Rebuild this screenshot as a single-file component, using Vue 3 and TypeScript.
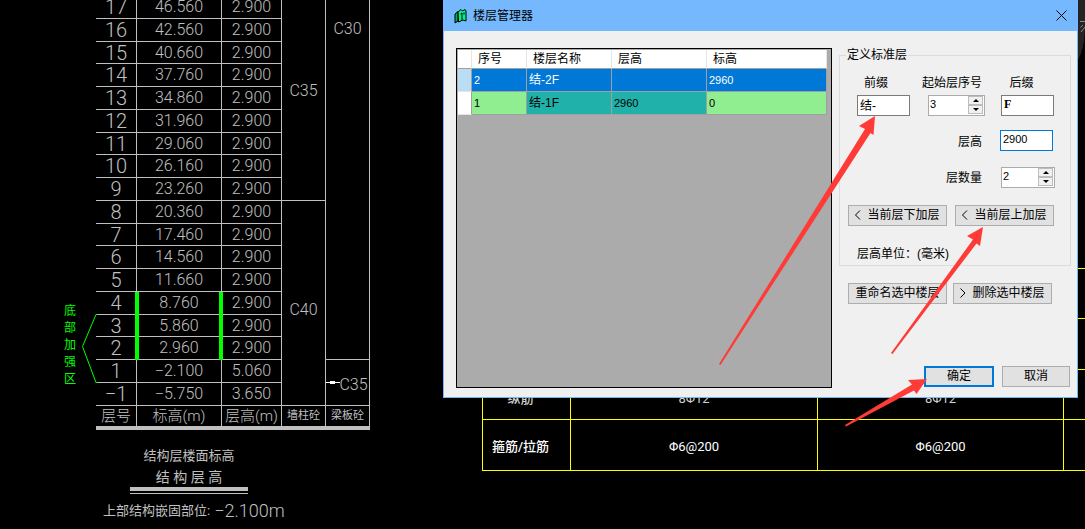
<script setup lang="ts">
import { ref } from 'vue'

interface Storey {
  no: string
  level: string
  height: string
  wall?: { grade: string; span: number; cls: string }
  slab?: { grade: string; span: number; cls: string }
  marked?: boolean
}

const storeys: Storey[] = [
  {
    no: '17', level: '46.560', height: '2.900',
    wall: { grade: 'C35', span: 9, cls: 'wall-upper' },
    slab: { grade: 'C30', span: 16, cls: 'slab-upper' },
  },
  { no: '16', level: '42.560', height: '2.900' },
  { no: '15', level: '40.660', height: '2.900' },
  { no: '14', level: '37.760', height: '2.900' },
  { no: '13', level: '34.860', height: '2.900' },
  { no: '12', level: '31.960', height: '2.900' },
  { no: '11', level: '29.060', height: '2.900' },
  { no: '10', level: '26.160', height: '2.900' },
  { no: '9', level: '23.260', height: '2.900' },
  { no: '8', level: '20.360', height: '2.900', wall: { grade: 'C40', span: 9, cls: 'wall-lower' } },
  { no: '7', level: '17.460', height: '2.900' },
  { no: '6', level: '14.560', height: '2.900' },
  { no: '5', level: '11.660', height: '2.900' },
  { no: '4', level: '8.760', height: '2.900', marked: true },
  { no: '3', level: '5.860', height: '2.900', marked: true },
  { no: '2', level: '2.960', height: '2.900', marked: true },
  { no: '1', level: '−2.100', height: '5.060', slab: { grade: 'C35', span: 2, cls: 'slab-lower' } },
  { no: '−1', level: '−5.750', height: '3.650' },
]

const floors = ref([
  { no: '2', name: '结-2F', height: '', level: '2960' },
  { no: '1', name: '结-1F', height: '2960', level: '0' },
])
const selected = ref('2')

const prefix = ref('结-')
const suffix = ref('F')
const startNo = ref(3)
const floorHeight = ref('2900')
const count = ref(2)
</script>

<template>
  <main class="canvas">
    <section class="storeys">
      <table class="storey-table">
        <tbody>
          <tr v-for="s in storeys" :key="s.no">
            <td class="no">{{ s.no }}</td>
            <td class="level" :class="{ marked: s.marked }">{{ s.level }}</td>
            <td class="height">{{ s.height }}</td>
            <td v-if="s.wall" class="grade" :class="s.wall.cls" :rowspan="s.wall.span">{{ s.wall.grade }}</td>
            <td v-if="s.slab" class="grade" :class="s.slab.cls" :rowspan="s.slab.span">{{ s.slab.grade }}</td>
          </tr>
        </tbody>
        <tfoot>
          <tr>
            <th>层号</th>
            <th>标高(m)</th>
            <th>层高(m)</th>
            <th class="small">墙柱砼</th>
            <th class="small">梁板砼</th>
          </tr>
        </tfoot>
      </table>
      <div class="caption">
        <p>结构层楼面标高</p>
        <p class="wide">结 构 层 高</p>
      </div>
      <p class="note">上部结构嵌固部位:<span>−2.100m</span></p>
    </section>

    <div class="zone">
      <span>底</span><span>部</span><span>加</span><span>强</span><span>区</span>
    </div>
    <svg class="bracket" width="16" height="70" viewBox="0 0 16 70" aria-hidden="true">
      <path d="M15.500.5H14L.5 32.500 14 68.500H15.500" fill="none" stroke="#00ff00" />
    </svg>
    <svg class="leader" width="14" height="5" viewBox="0 0 14 5" aria-hidden="true">
      <path d="M0 2h14v1H0zM4 1h5v3H4z" fill="#fff" />
    </svg>

    <table class="rebar">
      <tbody>
        <tr><td></td><td></td><td></td><td></td></tr>
        <tr><td></td><td></td><td></td><td></td></tr>
        <tr class="dim"><th>纵筋</th><td>8Φ12</td><td>8Φ12</td><td></td></tr>
        <tr><th>箍筋/拉筋</th><td>Φ6@200</td><td>Φ6@200</td><td></td></tr>
      </tbody>
    </table>

    <svg class="compass" width="7" height="62" viewBox="0 0 7 62" aria-hidden="true">
      <path d="M0 0h7v29Q6 50 0 60z" fill="#242424" />
      <path d="M2 21.500h5M5 25 2.500 27.500M7 27 3 32" stroke="#8d8d8d" fill="none" />
    </svg>

    <section class="dialog" role="dialog" aria-labelledby="dialog-title">
      <header class="titlebar">
        <svg width="13" height="16" viewBox="0 0 13 16" aria-hidden="true">
          <path d="M1 6 4 3.500V13L1 15z" fill="#08a860" stroke="#000" />
          <path d="M4 4 7 1.500 8.500 3 11 1.500 12 3V13L9 12 4.500 14z" fill="#00f58a" stroke="#000" />
          <path d="M6.500 6 8 5v7M10 4.500v2" fill="none" stroke="#000" />
        </svg>
        <h1 id="dialog-title">楼层管理器</h1>
        <button class="close" type="button" aria-label="关闭">
          <svg width="11" height="11" viewBox="0 0 11 11"><path d="M.5.5l10 10M10.500.5l-10 10" stroke="#000" /></svg>
        </button>
      </header>

      <div class="content">
        <div class="grid-box">
          <table class="floors">
            <colgroup><col class="c-mark"><col class="c-no"><col class="c-name"><col class="c-height"><col></colgroup>
            <thead>
              <tr><td></td><th>序号</th><th>楼层名称</th><th>层高</th><th>标高</th></tr>
            </thead>
            <tbody>
              <tr v-for="f in floors" :key="f.no" :class="{ selected: f.no === selected }" @click="selected = f.no">
                <td class="mark"></td>
                <td>{{ f.no }}</td>
                <td class="teal name">{{ f.name }}</td>
                <td class="teal">{{ f.height }}</td>
                <td>{{ f.level }}</td>
              </tr>
            </tbody>
          </table>
        </div>

        <div class="side">
          <fieldset>
            <legend>定义标准层</legend>
            <div class="fields">
              <label class="col-a" for="prefix">前缀</label>
              <label class="col-b" for="start">起始层序号</label>
              <label class="col-c" for="suffix">后缀</label>
              <input id="prefix" v-model="prefix" class="cjk" type="text">
              <div class="spinner middle">
                <input id="start" v-model="startNo" type="text" inputmode="numeric">
                <div class="steps">
                  <button type="button" aria-label="增加序号" @click="startNo++"><i class="up"></i></button>
                  <button type="button" aria-label="减少序号" @click="startNo--"><i class="down"></i></button>
                </div>
              </div>
              <input id="suffix" v-model="suffix" class="serif" type="text">
            </div>
            <div class="line">
              <label for="height">层高</label>
              <input id="height" v-model="floorHeight" class="focus" type="text">
            </div>
            <div class="line second">
              <label for="count">层数量</label>
              <div class="spinner">
                <input id="count" v-model="count" type="text" inputmode="numeric">
                <div class="steps">
                  <button type="button" aria-label="增加数量" @click="count++"><i class="up"></i></button>
                  <button type="button" aria-label="减少数量" @click="count--"><i class="down"></i></button>
                </div>
              </div>
            </div>
            <div class="pair">
              <button class="btn" type="button"><svg width="6" height="10" viewBox="0 0 6 10" aria-hidden="true"><path d="M5 .5.5 5 5 9.500" /></svg>当前层下加层</button>
              <button class="btn" type="button"><svg width="6" height="10" viewBox="0 0 6 10" aria-hidden="true"><path d="M5 .5.5 5 5 9.500" /></svg>当前层上加层</button>
            </div>
            <p class="unit">层高单位：(毫米)</p>
          </fieldset>
          <div class="pair lower">
            <button class="btn" type="button">重命名选中楼层</button>
            <button class="btn" type="button"><svg width="6" height="10" viewBox="0 0 6 10" aria-hidden="true"><path d="M.5.5 5 5 .5 9.500" /></svg>删除选中楼层</button>
          </div>
          <div class="actions">
            <button class="btn primary" type="button">确定</button>
            <button class="btn" type="button">取消</button>
          </div>
        </div>
      </div>
    </section>

    <svg class="arrows" width="270" height="315" viewBox="715 113 270 315" aria-hidden="true">
      <path d="M875 116 859 126 865 129 719 364 720.500 365 870.500 133 873.500 135z" />
      <path d="M983 227 967 236 973 239.500 891 353 892.500 354 976.500 243.500 980 246z" />
      <path d="M927 379 908 380 912 384.500 845 425 846 426.500 914 390.500 916.500 394z" />
    </svg>
  </main>
</template>

<style>
body {
  background: #000;
}
</style>

<style scoped>
* {
  box-sizing: border-box;
}

p,
h1 {
  margin: 0;
  font-weight: 400;
}

.canvas {
  position: relative;
  min-height: 100vh;
  overflow: hidden;
  background: #000;
  color: #c0c0c0;
  font-family: Roboto, "Liberation Sans", "Noto Sans CJK SC", sans-serif;
  font-weight: 300;
}

/* drawing: storey table */
.storeys {
  position: absolute;
  left: 96px;
  top: -4px;
  width: 274px;
}

.storey-table {
  width: 100%;
  table-layout: fixed;
  border-spacing: 0;
  border-bottom: 4px solid #c0c0c0;
  text-align: center;
  font-size: 16px;
  line-height: 20px;
}

.storey-table td,
.storey-table th {
  padding: 0;
  border-right: 1px solid #c0c0c0;
  font-weight: 300;
  white-space: nowrap;
}

.storey-table td {
  border-bottom: 1px solid #c0c0c0;
}

.storey-table tbody tr {
  height: 23px;
}

.storey-table tbody tr:nth-child(4n + 3) {
  height: 22px;
}

.storey-table .no {
  width: 41px;
  font-size: 20px;
}

.storey-table .level {
  position: relative;
  width: 85px;
}

.storey-table .height {
  width: 60px;
}

.storey-table .marked::before,
.storey-table .marked::after {
  content: "";
  position: absolute;
  top: 0;
  bottom: -1px;
  width: 4px;
  background: #00ff00;
}

.storey-table .marked::before {
  left: -2px;
}

.storey-table .marked::after {
  right: -2px;
}

.grade {
  width: 44px;
  vertical-align: top;
}

.wall-upper {
  padding-top: 85px !important;
}

.slab-upper {
  padding-top: 23px !important;
}

.wall-lower {
  padding-top: 99px !important;
}

.slab-lower {
  padding: 15px 0 0 12px !important;
}

.storey-table tfoot th {
  height: 20px;
  font-size: 15px;
}

.storey-table tfoot .small {
  font-size: 11px;
  font-weight: 400;
}

.caption {
  width: 118px;
  margin: 15px 0 0 34px;
  padding-bottom: 2px;
  border-bottom: 1px solid #c0c0c0;
  text-align: center;
  font-size: 13px;
  line-height: 22px;
}

.caption .wide {
  border-bottom: 4px solid #c0c0c0;
  font-size: 14px;
  line-height: 20px;
}

.note {
  display: flex;
  gap: 4px;
  margin: 6px 0 0 7px;
  font-size: 13px;
  line-height: 22px;
  white-space: nowrap;
}

.note,
.caption p {
  font-weight: 400;
}

.note span {
  font-size: 18px;
  font-weight: 300;
}

.zone {
  position: absolute;
  left: 64px;
  top: 303px;
  display: flex;
  flex-direction: column;
  color: #00ff00;
  font-size: 12px;
  font-weight: 400;
  line-height: 17px;
}

.bracket {
  position: absolute;
  left: 82px;
  top: 314px;
}

.leader {
  position: absolute;
  left: 326px;
  top: 380px;
}

/* drawing: reinforcement table */
.rebar {
  position: absolute;
  left: 482px;
  right: 0;
  top: 268px;
  width: calc(100% - 482px);
  table-layout: fixed;
  border-spacing: 0;
  border-top: 1px solid #ffff00;
  border-left: 1px solid #ffff00;
  color: #fff;
  font-size: 13px;
  line-height: 18px;
  text-align: center;
}

.rebar th,
.rebar td {
  height: 51px;
  padding: 4px 0 0;
  border: 0 solid #ffff00;
  border-width: 0 1px 1px 0;
  font-weight: 400;
}

.rebar tr:first-child td,
.rebar .dim > * {
  height: 50px;
}

.rebar tr > :nth-child(1) {
  width: 88px;
}

.rebar tr > :nth-child(2) {
  width: 247px;
}

.rebar tr > :nth-child(3) {
  width: 246px;
}

.rebar tr > :last-child {
  border-right: 0;
}

.rebar th {
  padding-right: 12px;
  font-weight: 500;
}

.rebar .dim {
  color: #d0d0d0;
}

.rebar .dim > * {
  padding-top: 8px;
}

.compass {
  position: absolute;
  right: 0;
  top: 0;
}

/* dialog */
.dialog {
  position: absolute;
  left: 443px;
  right: 7px;
  top: 0;
  border: 1px solid #75b8fd;
  border-top: 0;
  background: #f0f0f0;
  color: #000;
  font-family: "Liberation Sans", "Noto Sans CJK SC", sans-serif;
  font-size: 12px;
  font-weight: 400;
  line-height: 16px;
}

.titlebar {
  display: flex;
  align-items: center;
  gap: 6px;
  height: 31px;
  padding: 0 10px;
  background: #75b8fd;
}

.titlebar h1 {
  flex: 1;
  font-size: 12px;
}

.close {
  display: flex;
  padding: 0;
  border: 0;
  background: none;
}

.content {
  display: flex;
  gap: 7px;
  padding: 17px 6px 9px 12px;
}

.grid-box {
  flex: 1;
  min-height: 340px;
  padding: 1px 4px 0 1px;
  border: 1px solid #000;
  background: #ababab;
}

.floors {
  width: 100%;
  table-layout: fixed;
  border-spacing: 0;
  font-size: 11px;
}

.c-mark {
  width: 14px;
}

.c-no {
  width: 55px;
}

.c-name {
  width: 85px;
}

.c-height {
  width: 95px;
}

.floors th,
.floors td {
  padding: 0 2px;
  border: 0 solid #a0a0a0;
  border-width: 0 1px 1px 0;
}

.floors thead > tr > * {
  height: 19px;
  padding: 0 6px;
  background: #fff;
  border-right-color: #e5e5e5;
  font-size: 12px;
  font-weight: 400;
  text-align: left;
}

.floors tbody td {
  height: 23px;
  background: #90ee90;
}

.floors tbody .teal {
  background: #20b2aa;
}

.floors tbody .name {
  font-size: 12px;
}

.floors tbody .mark {
  background: #fff;
  border-bottom-color: #e5e5e5;
}

.floors .selected td,
.floors .selected .teal {
  background: #0078d7;
  color: #fff;
}

.floors tbody .selected .mark {
  background: #badcf4;
}

.side {
  display: flex;
  flex-direction: column;
  width: 232px;
}

fieldset {
  min-width: 0;
  margin: 0;
  padding: 0 0 3px 8px;
  border: 1px solid #dcdcdc;
}

legend {
  height: 15px;
  margin-left: -2px;
  padding: 0 1px;
  line-height: 14px;
}

.fields {
  display: grid;
  grid-template-columns: 54px 56px 53px;
  column-gap: 17px;
  row-gap: 4px;
  margin: 12px 0 0 9px;
}

.fields label {
  justify-self: center;
  margin: 0 -8px;
  white-space: nowrap;
}

.fields .col-a {
  padding-right: 16px;
}

.fields .col-b {
  padding-right: 8px;
}

.fields .col-c {
  padding-right: 12px;
}

input {
  width: 53px;
  height: 21px;
  padding: 0 2px 3px;
  border: 1px solid #7a7a7a;
  border-radius: 0;
  outline: 0;
  background: #fff;
  color: #000;
  font-family: inherit;
  font-size: 11px;
}

input.cjk {
  font-size: 12px;
}

input.serif {
  font-family: "Liberation Serif", serif;
  font-size: 12px;
  font-weight: 700;
}

input.focus {
  border-color: #0078d7;
}

.spinner {
  display: flex;
  width: 54px;
  height: 21px;
  padding: 0 1px 1px 0;
  border: 1px solid #acacac;
  background: #fff;
}

.spinner.middle {
  width: 57px;
}

.spinner input {
  flex: 1;
  width: 0;
  height: 19px;
  padding: 0 1px 3px;
  border: 0;
}

.steps {
  display: flex;
  flex-direction: column;
  width: 15px;
}

.steps button {
  display: flex;
  flex: 1;
  align-items: center;
  justify-content: center;
  padding: 0;
  border: 1px solid #bdbdbd;
  background: #f0f0f0;
}

.up,
.down {
  border: 3px solid transparent;
}

.up {
  border-top: 0;
  border-bottom-color: #000;
}

.down {
  border-bottom: 0;
  border-top-color: #000;
}

.line {
  display: flex;
  align-items: center;
  justify-content: flex-end;
  gap: 18px;
  margin: 14px 17px 0 0;
}

.line label {
  padding-top: 2px;
}

.line.second {
  gap: 19px;
  margin: 16px 15px 0 0;
}

.line.second label {
  padding-top: 0;
}

.pair {
  display: flex;
  gap: 8px;
  margin-top: 17px;
}

.pair.lower {
  gap: 6px;
  margin: 17px 0 0 9px;
}

.btn {
  display: flex;
  align-items: center;
  justify-content: center;
  gap: 6px;
  width: 99px;
  height: 21px;
  padding: 0 0 2px;
  border: 1px solid #adadad;
  background: #e1e1e1;
  color: #000;
  font-family: inherit;
  font-size: 12px;
  line-height: 16px;
  white-space: nowrap;
}

.btn svg {
  fill: none;
  stroke: #000;
}

.unit {
  margin: 20px 0 0 9px;
}

.actions {
  display: flex;
  justify-content: flex-end;
  gap: 8px;
  margin-top: auto;
  padding: 0 1px 1px 0;
}

.actions .btn {
  width: 68px;
}

.actions .primary {
  width: 70px;
  border: 2px solid #0078d7;
}

.arrows {
  position: absolute;
  left: 715px;
  top: 113px;
  fill: #ff3b37;
  pointer-events: none;
}
</style>
